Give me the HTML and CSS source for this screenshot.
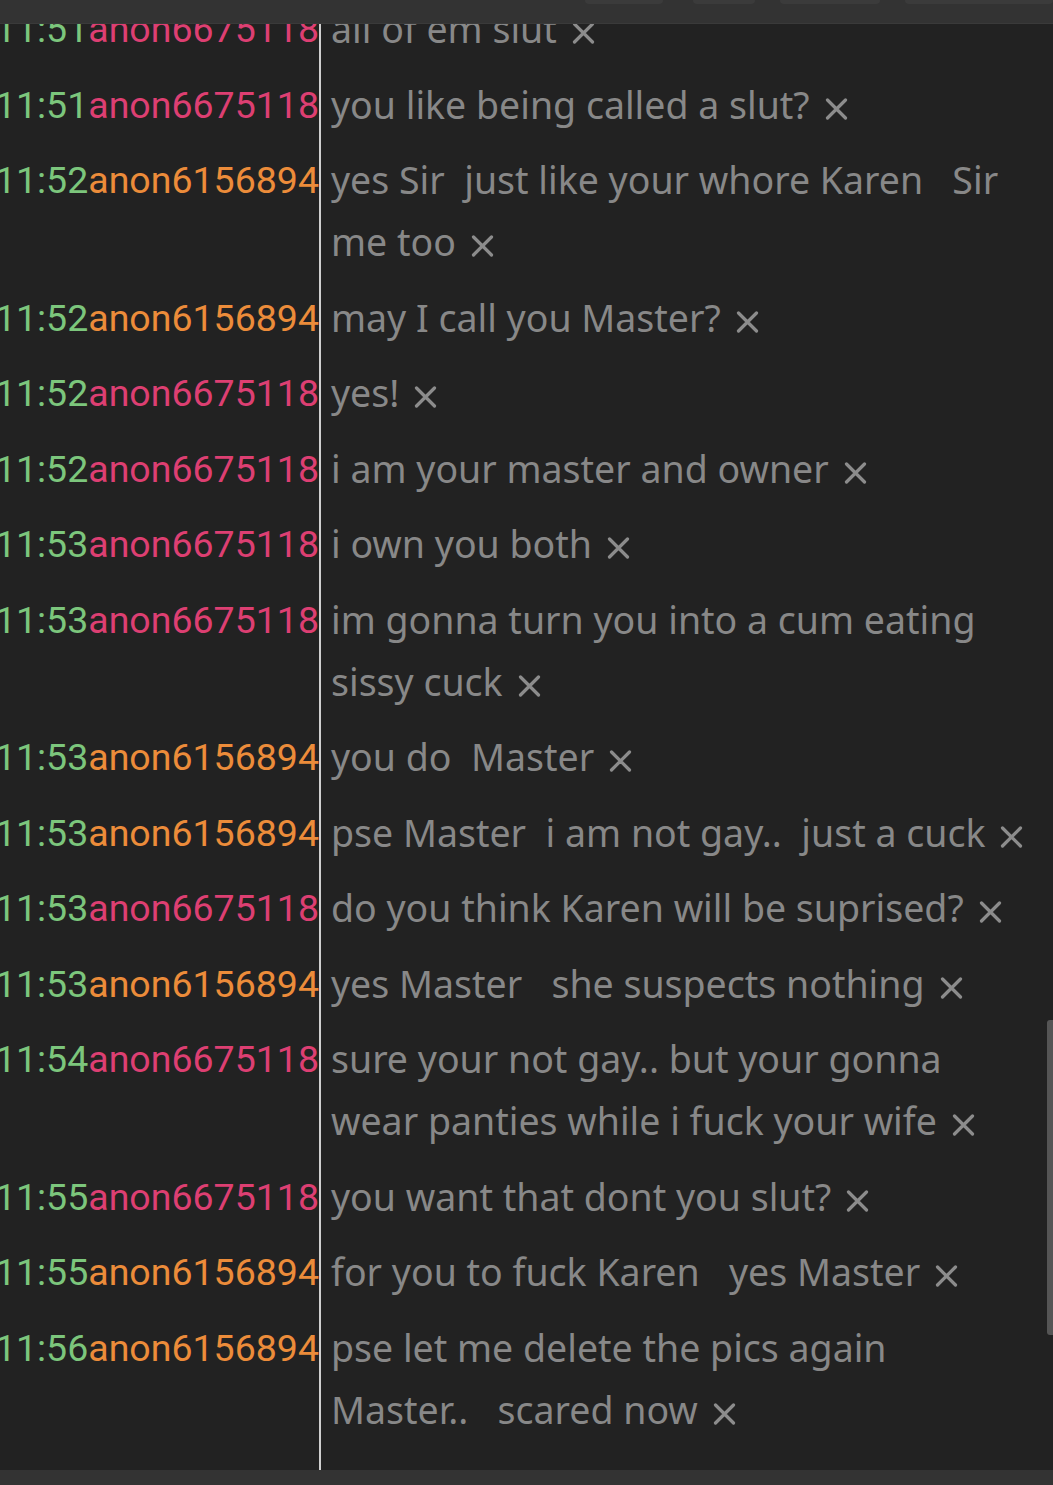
FILE: index.html
```html
<!DOCTYPE html>
<html>
<head>
<meta charset="utf-8">
<link rel="stylesheet" href="styles.css">
</head>
<body>
<svg width="0" height="0" class="defs" aria-hidden="true">
  <symbol id="x" viewBox="0 0 23 22"><path d="M2.5 2 L20.5 20 M20.5 2 L2.5 20" stroke="#8c8c8c" stroke-width="3.2" stroke-linecap="round" fill="none"/></symbol>
</svg>
<div class="app">
  <div class="topbar">
    <span class="tab t1"></span><span class="tab t2"></span><span class="tab t3"></span><span class="tab t4"></span>
  </div>
  <div class="viewport">
    <div class="log">
      <div class="row"><div class="who"><span class="time">11:51</span><span class="pink">anon6675118</span></div><div class="msg">all of em slut<svg class="x"><use href="#x"/></svg></div></div>
      <div class="row"><div class="who"><span class="time">11:51</span><span class="pink">anon6675118</span></div><div class="msg">you like being called a slut?<svg class="x"><use href="#x"/></svg></div></div>
      <div class="row"><div class="who"><span class="time">11:52</span><span class="orange">anon6156894</span></div><div class="msg">yes Sir&nbsp; just like your whore Karen &nbsp; Sir<br>me too<svg class="x"><use href="#x"/></svg></div></div>
      <div class="row"><div class="who"><span class="time">11:52</span><span class="orange">anon6156894</span></div><div class="msg">may I call you Master?<svg class="x"><use href="#x"/></svg></div></div>
      <div class="row"><div class="who"><span class="time">11:52</span><span class="pink">anon6675118</span></div><div class="msg">yes!<svg class="x"><use href="#x"/></svg></div></div>
      <div class="row"><div class="who"><span class="time">11:52</span><span class="pink">anon6675118</span></div><div class="msg">i am your master and owner<svg class="x"><use href="#x"/></svg></div></div>
      <div class="row"><div class="who"><span class="time">11:53</span><span class="pink">anon6675118</span></div><div class="msg">i own you both<svg class="x"><use href="#x"/></svg></div></div>
      <div class="row"><div class="who"><span class="time">11:53</span><span class="pink">anon6675118</span></div><div class="msg">im gonna turn you into a cum eating<br>sissy cuck<svg class="x"><use href="#x"/></svg></div></div>
      <div class="row"><div class="who"><span class="time">11:53</span><span class="orange">anon6156894</span></div><div class="msg">you do&nbsp; Master<svg class="x"><use href="#x"/></svg></div></div>
      <div class="row"><div class="who"><span class="time">11:53</span><span class="orange">anon6156894</span></div><div class="msg">pse Master&nbsp; i am not gay..&nbsp; just a cuck<svg class="x"><use href="#x"/></svg></div></div>
      <div class="row"><div class="who"><span class="time">11:53</span><span class="pink">anon6675118</span></div><div class="msg">do you think Karen will be suprised?<svg class="x"><use href="#x"/></svg></div></div>
      <div class="row"><div class="who"><span class="time">11:53</span><span class="orange">anon6156894</span></div><div class="msg">yes Master &nbsp; she suspects nothing<svg class="x"><use href="#x"/></svg></div></div>
      <div class="row"><div class="who"><span class="time">11:54</span><span class="pink">anon6675118</span></div><div class="msg">sure your not gay.. but your gonna<br>wear panties while i fuck your wife<svg class="x"><use href="#x"/></svg></div></div>
      <div class="row"><div class="who"><span class="time">11:55</span><span class="pink">anon6675118</span></div><div class="msg">you want that dont you slut?<svg class="x"><use href="#x"/></svg></div></div>
      <div class="row"><div class="who"><span class="time">11:55</span><span class="orange">anon6156894</span></div><div class="msg">for you to fuck Karen &nbsp; yes Master<svg class="x"><use href="#x"/></svg></div></div>
      <div class="row"><div class="who"><span class="time">11:56</span><span class="orange">anon6156894</span></div><div class="msg">pse let me delete the pics again<br>Master.. &nbsp; scared now<svg class="x"><use href="#x"/></svg></div></div>
      <div class="row"><div class="who"><span class="time">11:56</span><span class="pink">anon6675118</span></div><div class="msg">&nbsp;</div></div>
    </div>
    <div class="scrollbar"></div>
  </div>
  <div class="bottombar"></div>
</div>
</body>
</html>
```

FILE: styles.css
```css
html, body {
  margin: 0;
  padding: 0;
  background: #222222;
}

.defs {
  position: absolute;
  width: 0;
  height: 0;
}

.app {
  width: 1053px;
  height: 1485px;
  display: flex;
  flex-direction: column;
  overflow: hidden;
  background: #222222;
}

.topbar {
  flex: 0 0 24px;
  background: #333333;
  position: relative;
  border-bottom: 1px solid #3a3a3a;
  box-sizing: border-box;
}

.tab {
  position: absolute;
  top: 0;
  height: 4px;
  background: #3b3b3b;
  border-radius: 0 0 4px 4px;
}
.t1 { left: 585px; width: 78px; }
.t2 { left: 693px; width: 62px; }
.t3 { left: 780px; width: 100px; }
.t4 { left: 905px; width: 148px; }

.viewport {
  flex: 1 1 auto;
  position: relative;
  overflow: hidden;
}

.log {
  margin-top: -33px;
  display: flex;
  flex-direction: column;
}

.row {
  display: flex;
  align-items: stretch;
}

.who {
  flex: 0 0 321px;
  width: 321px;
  box-sizing: border-box;
  padding-top: 7px;
  display: flex;
  justify-content: flex-end;
  align-items: flex-start;
  white-space: nowrap;
  overflow: hidden;
  font-family: Roboto, "Liberation Sans", sans-serif;
  font-size: 37.5px;
  line-height: 62px;
  border-right: 2px solid #cfcfcf;
}

.time { color: #7cc67c; }
.pink { color: #dd3f72; }
.orange { color: #ec8c3a; }

.msg {
  flex: 1 1 auto;
  padding: 7px 0 6.5px 10px;
  font-family: "Noto Sans", "Open Sans", sans-serif;
  font-size: 37.5px;
  line-height: 62px;
  color: #888888;
  white-space: nowrap;
}

.x {
  display: inline-block;
  width: 23px;
  height: 22px;
  margin-left: 15px;
  vertical-align: -1px;
}

.scrollbar {
  position: absolute;
  right: 0;
  top: 996px;
  width: 6px;
  height: 315px;
  background: #555555;
  border-radius: 3px 0 0 3px;
}

.bottombar {
  flex: 0 0 15px;
  background: #333333;
}
```
